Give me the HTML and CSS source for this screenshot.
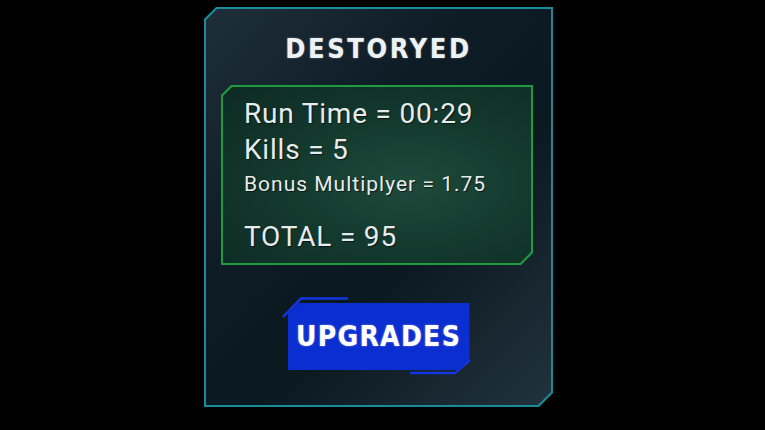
FILE: index.html
```html
<!DOCTYPE html>
<html lang="en">
<head>
    <meta charset="UTF-8">
    <title>Destroyed</title>
    <link rel="stylesheet" href="styles.css">
</head>
<body>
    <div class="panel">
        <div class="panel-inner">
            <h1 class="title">DESTORYED</h1>

            <div class="stats">
                <div class="stats-inner">
                    <p class="stat">Run Time = 00:29</p>
                    <p class="stat">Kills = 5</p>
                    <p class="stat small">Bonus Multiplyer = 1.75</p>
                    <p class="stat total">TOTAL = 95</p>
                </div>
            </div>

            <div class="btn-wrap">
                <svg class="btn-deco" width="200" height="80" viewBox="0 0 200 80">
                    <polyline points="0,20 18,1.5 65,1.5" fill="none" stroke="#1436e0" stroke-width="2.5"/>
                    <polyline points="187,63 172,76 127,76" fill="none" stroke="#1436e0" stroke-width="2.5"/>
                </svg>
                <button class="btn">UPGRADES</button>
            </div>
        </div>
    </div>
</body>
</html>
```

FILE: styles.css
```css
body {
    margin: 0;
    background: #000;
    font-family: Roboto, "Liberation Sans", sans-serif;
}
.panel {
    width: 349px;
    height: 400px;
    margin: 7px 0 0 204px;
    padding: 2px;
    box-sizing: border-box;
    background: #1a8b98;
    clip-path: polygon(12px 0, 100% 0, 100% calc(100% - 14px), calc(100% - 14px) 100%, 0 100%, 0 12px);
}
.panel-inner {
    height: 100%;
    background: linear-gradient(135deg, #1f2f3a 0%, #0e1c26 35%, #0a1820 60%, #22323c 100%);
    clip-path: polygon(11px 0, 100% 0, 100% calc(100% - 13px), calc(100% - 13px) 100%, 0 100%, 0 11px);
    display: flex;
    flex-direction: column;
    align-items: center;
}
.title {
    margin: 24px 0 0 0;
    height: 32px;
    font-family: "DejaVu Sans Condensed", "DejaVu Sans", sans-serif;
    font-size: 27px;
    font-weight: bold;
    letter-spacing: 2.6px;
    color: #eef2f4;
    text-shadow: 0 0 2px rgba(255,255,255,0.4);
    line-height: 32px;
}
.stats {
    width: 312px;
    height: 180px;
    margin: 20px 0 0 -3px;
    padding: 2px;
    box-sizing: border-box;
    background: #1f9a3e;
    clip-path: polygon(10px 0, 100% 0, 100% calc(100% - 12px), calc(100% - 12px) 100%, 0 100%, 0 10px);
}
.stats-inner {
    height: 100%;
    box-sizing: border-box;
    padding: 9px 0 0 21px;
    background: radial-gradient(ellipse at 60% 55%, #1f4a3c 0%, #143a2e 45%, #0d2a24 100%);
    clip-path: polygon(9px 0, 100% 0, 100% calc(100% - 11px), calc(100% - 11px) 100%, 0 100%, 0 9px);
}
.stat {
    margin: 0;
    font-size: 28px;
    line-height: 36px;
    letter-spacing: 0.8px;
    color: #e6ecec;
    text-shadow: 1px 1px 1px rgba(0,0,0,0.6);
}
.stat.small {
    font-size: 21px;
    line-height: 32px;
    letter-spacing: 1px;
}
.stat.total {
    margin-top: 19px;
}
.btn-wrap {
    position: relative;
    margin: 38px 0 0 0;
}
.btn-deco {
    position: absolute;
    left: -5px;
    top: -6px;
    overflow: visible;
}
.btn {
    display: block;
    width: 182px;
    height: 67px;
    padding: 0;
    border: none;
    background: #0b2ed0;
    color: #fff;
    font-family: "DejaVu Sans Condensed", "DejaVu Sans", sans-serif;
    font-size: 28px;
    font-weight: bold;
    letter-spacing: 1.3px;
    text-shadow: 0 0 2px rgba(255,255,255,0.5);
    clip-path: polygon(11px 0, 100% 0, 100% calc(100% - 11px), calc(100% - 11px) 100%, 0 100%, 0 11px);
    cursor: pointer;
}
```
